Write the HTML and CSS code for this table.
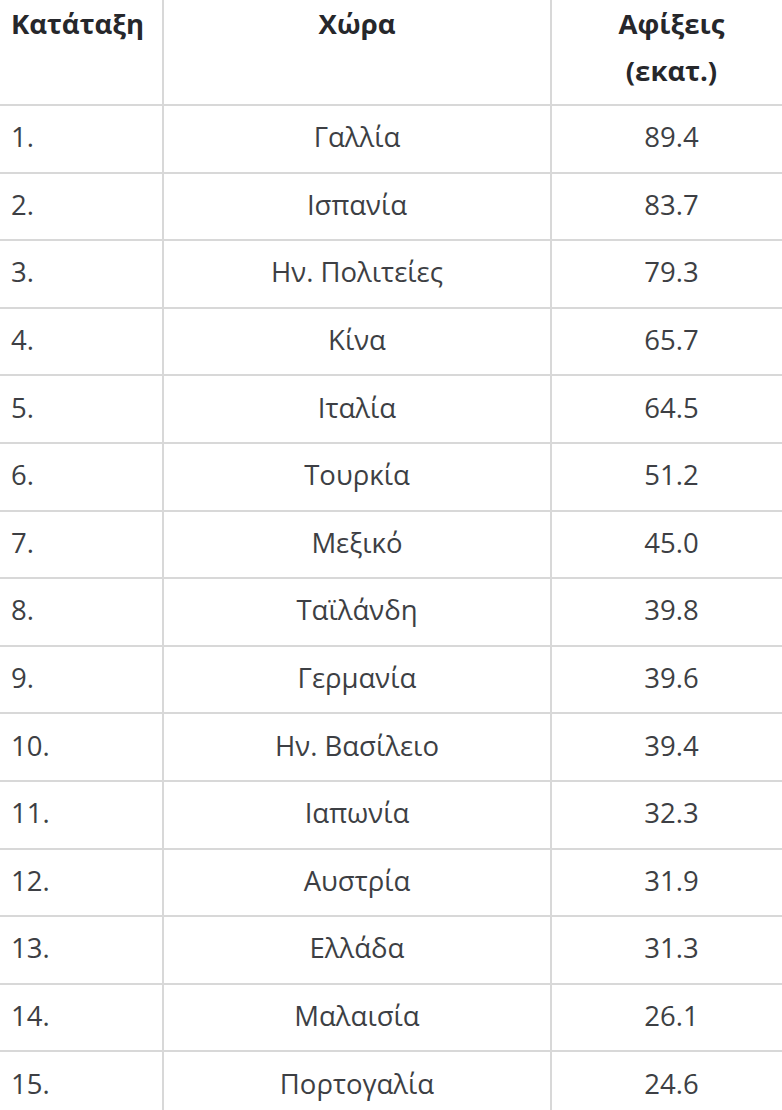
FILE: index.html
```html
<!DOCTYPE html>
<html lang="el">
<head>
<meta charset="utf-8">
<title>Αφίξεις τουριστών</title>
<link rel="stylesheet" href="styles.css">
</head>
<body>
<table class="rank-table">
  <colgroup>
    <col class="c-rank">
    <col class="c-country">
    <col class="c-arrivals">
  </colgroup>
  <thead>
    <tr>
      <th class="rank">Κατάταξη</th>
      <th>Χώρα</th>
      <th>Αφίξεις<br>(εκατ.)</th>
    </tr>
  </thead>
  <tbody>
    <tr><td class="rank">1.</td><td>Γαλλία</td><td>89.4</td></tr>
    <tr><td class="rank">2.</td><td>Ισπανία</td><td>83.7</td></tr>
    <tr><td class="rank">3.</td><td>Ην. Πολιτείες</td><td>79.3</td></tr>
    <tr><td class="rank">4.</td><td>Κίνα</td><td>65.7</td></tr>
    <tr><td class="rank">5.</td><td>Ιταλία</td><td>64.5</td></tr>
    <tr><td class="rank">6.</td><td>Τουρκία</td><td>51.2</td></tr>
    <tr><td class="rank">7.</td><td>Μεξικό</td><td>45.0</td></tr>
    <tr><td class="rank">8.</td><td>Ταϊλάνδη</td><td>39.8</td></tr>
    <tr><td class="rank">9.</td><td>Γερμανία</td><td>39.6</td></tr>
    <tr><td class="rank">10.</td><td>Ην. Βασίλειο</td><td>39.4</td></tr>
    <tr><td class="rank">11.</td><td>Ιαπωνία</td><td>32.3</td></tr>
    <tr><td class="rank">12.</td><td>Αυστρία</td><td>31.9</td></tr>
    <tr><td class="rank">13.</td><td>Ελλάδα</td><td>31.3</td></tr>
    <tr><td class="rank">14.</td><td>Μαλαισία</td><td>26.1</td></tr>
    <tr><td class="rank">15.</td><td>Πορτογαλία</td><td>24.6</td></tr>
  </tbody>
</table>
</body>
</html>
```
FILE: styles.css
```css
html, body {
  margin: 0;
  padding: 0;
  background: #ffffff;
  overflow: hidden;
}

.rank-table {
  border-collapse: collapse;
  table-layout: fixed;
  width: 791px;
  font-family: "Open Sans", "Noto Sans", sans-serif;
  font-size: 27.5px;
  color: #3d3f44;
}

.c-rank { width: 163px; }
.c-country { width: 388px; }
.c-arrivals { width: 240px; }

.rank-table th,
.rank-table td {
  border: 2px solid #d8d8d8;
  text-align: center;
  padding: 0 12px;
}

.rank-table tr > :first-child { border-left: none; }
.rank-table tr > :last-child { border-right: none; }
.rank-table thead th { border-top: none; }

.rank-table th {
  height: 104px;
  vertical-align: top;
  font-weight: 700;
  line-height: 47px;
  color: #26272b;
}

.rank-table td {
  height: 62.6px;
  line-height: 30px;
  vertical-align: middle;
  padding-bottom: 3px;
}

.rank-table .rank {
  text-align: left;
  padding-left: 11px;
}
```
